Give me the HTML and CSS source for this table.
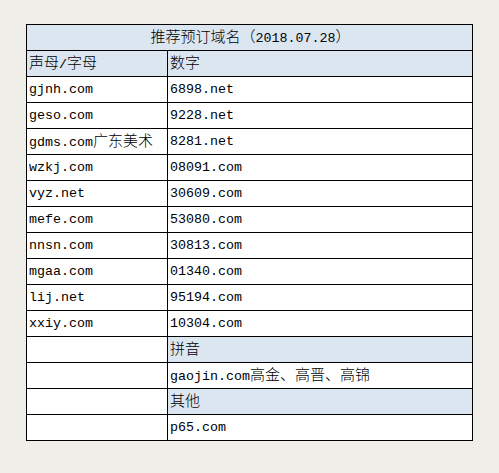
FILE: index.html
```html
<!DOCTYPE html>
<html lang="zh">
<head>
<meta charset="utf-8">
<title>推荐预订域名</title>
<link rel="stylesheet" href="styles.css">
</head>
<body>
<table class="domains">
  <colgroup><col class="c1"><col class="c2"></colgroup>
  <tr class="head"><td colspan="2" class="title"><span class="zh">推荐预订域名（</span>2018.07.28<span class="zh">）</span></td></tr>
  <tr class="head"><td><span class="zh">声母</span>/<span class="zh">字母</span></td><td><span class="zh">数字</span></td></tr>
  <tr><td>gjnh.com</td><td>6898.net</td></tr>
  <tr><td>geso.com</td><td>9228.net</td></tr>
  <tr><td>gdms.com<span class="zh">广东美术</span></td><td>8281.net</td></tr>
  <tr><td>wzkj.com</td><td>08091.com</td></tr>
  <tr><td>vyz.net</td><td>30609.com</td></tr>
  <tr><td>mefe.com</td><td>53080.com</td></tr>
  <tr><td>nnsn.com</td><td>30813.com</td></tr>
  <tr><td>mgaa.com</td><td>01340.com</td></tr>
  <tr><td>lij.net</td><td>95194.com</td></tr>
  <tr><td>xxiy.com</td><td>10304.com</td></tr>
  <tr><td></td><td class="hl"><span class="zh">拼音</span></td></tr>
  <tr><td></td><td>gaojin.com<span class="zh">高金、高晋、高锦</span></td></tr>
  <tr><td></td><td class="hl"><span class="zh">其他</span></td></tr>
  <tr><td></td><td>p65.com</td></tr>
</table>
</body>
</html>
```
FILE: styles.css
```css
html, body {
  margin: 0;
  padding: 0;
  background: #efeee9;
}
body {
  padding: 24px 0 0 26px;
}
.domains {
  border-collapse: collapse;
  width: 446px;
  table-layout: fixed;
  background: #ffffff;
  font-family: "Liberation Mono", "Noto Sans CJK SC", monospace;
  font-size: 13.33px;
  color: #000;
}
.domains col.c1 { width: 141px; }
.domains col.c2 { width: 305px; }
.domains td {
  border: 1px solid #000;
  height: 26px;
  padding: 0 0 0 2px;
  box-sizing: border-box;
  white-space: nowrap;
  vertical-align: middle;
  line-height: 20px;
}
.domains tr.head td,
.domains td.hl {
  background: #dce6f1;
}
.domains td.title {
  text-align: center;
}
.zh {
  font-family: "Noto Sans CJK SC", sans-serif;
  font-size: 15px;
  font-weight: 300;
}
```
